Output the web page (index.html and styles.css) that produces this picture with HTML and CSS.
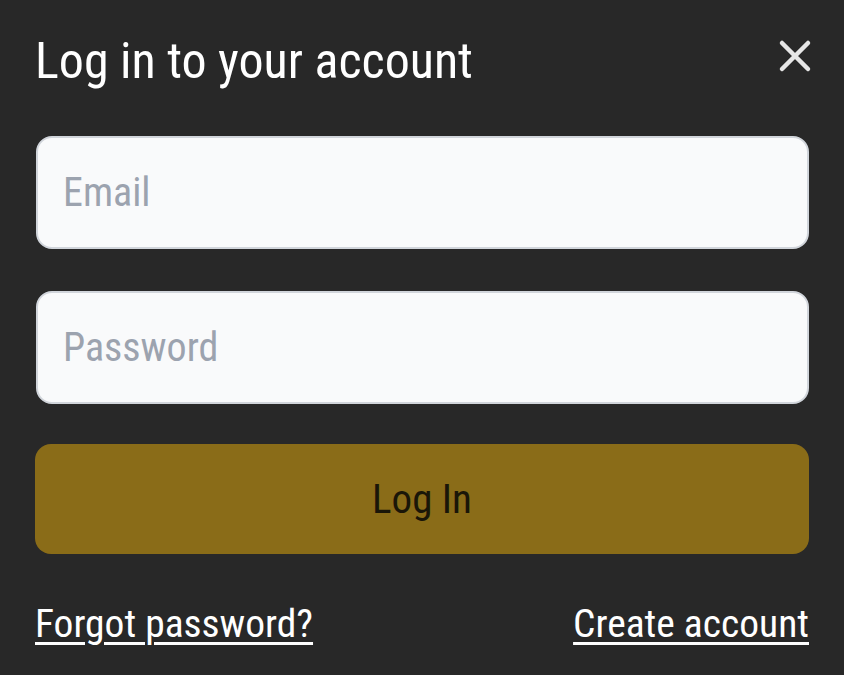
FILE: index.html
```html
<!DOCTYPE html>
<html lang="en">
<head>
    <meta charset="UTF-8">
    <meta name="viewport" content="width=device-width, initial-scale=1.0">
    <title>Log in</title>
    <link rel="stylesheet" href="styles.css">
</head>
<body>
    <div class="modal">
        <div class="modal-header">
            <h1 class="title">Log in to your account</h1>
            <button class="close" type="button" aria-label="Close">
                <svg width="34" height="34" viewBox="0 0 34 34">
                    <path d="M4 4 L30 30 M30 4 L4 30" stroke="#e6e6e6" stroke-width="4.5" stroke-linecap="round" fill="none"/>
                </svg>
            </button>
        </div>

        <form class="login-form" action="/" method="post">
            <input type="email" class="field" name="email" placeholder="Email">
            <input type="password" class="field" name="password" placeholder="Password">
            <button class="submit" type="submit">Log In</button>
        </form>

        <div class="links">
            <a href="#">Forgot password?</a>
            <a href="#">Create account</a>
        </div>
    </div>
</body>
</html>
```

FILE: styles.css
```css
html, body {
    margin: 0;
    background-color: #282828;
}
body {
    font-family: "Roboto", "Liberation Sans", sans-serif;
    font-stretch: 75%;
    color: #fff;
}
.modal {
    padding: 31px 35px 0 35px;
}
.modal-header {
    display: flex;
    justify-content: space-between;
    align-items: flex-start;
}
.title {
    margin: 0;
    font-size: 50px;
    font-weight: 400;
    line-height: 60px;
}
.close {
    background: none;
    border: none;
    padding: 0;
    margin-top: 8px;
    margin-right: -3px;
    cursor: pointer;
    line-height: 0;
}
.login-form {
    display: flex;
    flex-direction: column;
    margin-top: 45px;
}
.field {
    height: 113px;
    box-sizing: border-box;
    margin-left: 1px;
    border: 2px solid #d1d5db;
    border-radius: 16px;
    background-color: #f9fafb;
    padding: 0 25px;
    font-family: inherit;
    font-stretch: 75%;
    font-size: 40px;
    color: #111;
    margin-bottom: 42px;
}
.field::placeholder {
    color: #9ca3af;
}
.field + .field {
    margin-bottom: 40px;
}
.submit {
    height: 110px;
    border: none;
    border-radius: 16px;
    background-color: #8a6c18;
    color: #1a1608;
    font-family: inherit;
    font-stretch: 75%;
    font-size: 41px;
    cursor: pointer;
}
.links {
    display: flex;
    justify-content: space-between;
    margin-top: 46px;
    font-size: 39.5px;
}
.links a {
    color: #fff;
    text-decoration: underline;
    text-underline-offset: 5px;
    text-decoration-thickness: 3px;
}
```
